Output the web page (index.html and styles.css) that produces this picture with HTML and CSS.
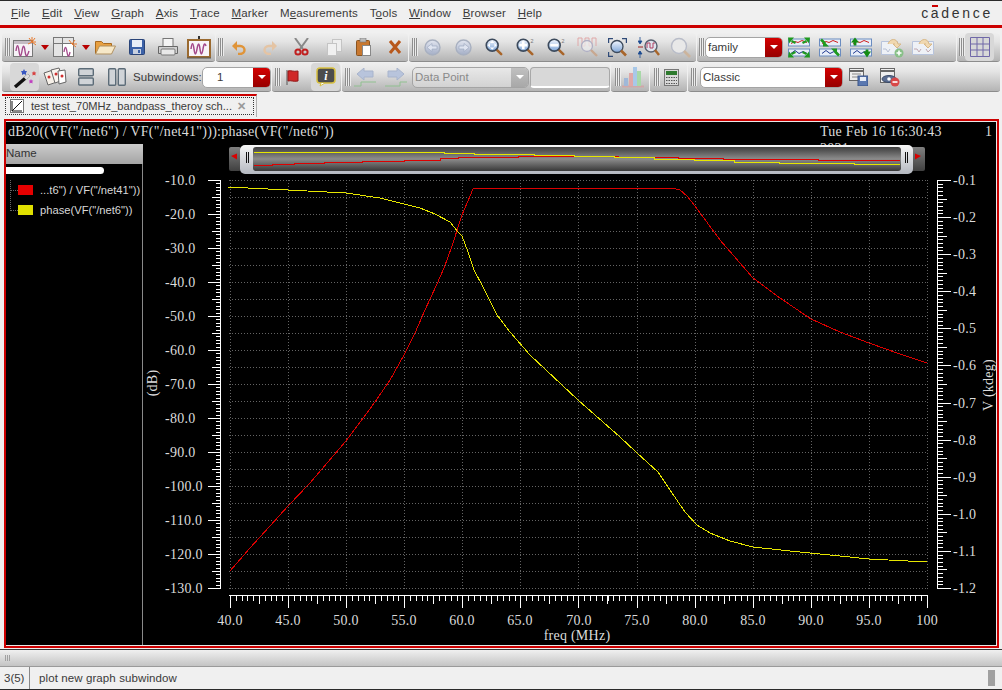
FILE: index.html
```html
<!DOCTYPE html>
<html lang="en">
<head>
<meta charset="utf-8">
<title>Cadence waveform viewer</title>
<link rel="stylesheet" href="styles.css">
</head>
<body>
<svg class="defs" width="0" height="0">
  <defs>
    <linearGradient id="lens" x1="0" y1="0" x2="0" y2="1"><stop offset="0" stop-color="#f4f8ff"/><stop offset="1" stop-color="#7fa6d8"/></linearGradient>
    <linearGradient id="round" x1="0" y1="0" x2="0" y2="1"><stop offset="0" stop-color="#e2e6f0"/><stop offset="1" stop-color="#a4aec6"/></linearGradient>
    <linearGradient id="pill" x1="0" y1="0" x2="0" y2="1"><stop offset="0" stop-color="#f6f6f6"/><stop offset="1" stop-color="#b4b8c0"/></linearGradient>
    <linearGradient id="well" x1="0" y1="0" x2="0" y2="1"><stop offset="0" stop-color="#3c3c3c"/><stop offset=".5" stop-color="#8c8c8c"/><stop offset="1" stop-color="#383838"/></linearGradient>
    <linearGradient id="cap" x1="0" y1="0" x2="0" y2="1"><stop offset="0" stop-color="#808080"/><stop offset="1" stop-color="#404040"/></linearGradient>
    <symbol id="glass" viewBox="0 0 20 20">
      <path d="M12 12l6 6" stroke="#a8652a" stroke-width="2.8" stroke-linecap="round"/>
      <circle cx="8" cy="8" r="6.6" fill="url(#lens)" stroke="#3c4a5c" stroke-width="1.8"/>
    </symbol>
    <symbol id="trace" viewBox="0 0 22 20">
      <rect x=".5" y="1.5" width="21" height="7" fill="#e8eef8" stroke="#6a8cc0"/>
      <rect x=".5" y="11.5" width="21" height="7" fill="#e8eef8" stroke="#6a8cc0"/>
      <path d="M3 6l4-2 3 1 4-2 5 2" stroke="#d02020" fill="none"/>
      <path d="M3 16l4-3 4 3 4-2 4 2" stroke="#203a90" fill="none"/>
    </symbol>
  </defs>
</svg>

<header class="menubar">
  <nav class="menus">
    <span><u>F</u>ile</span><span><u>E</u>dit</span><span><u>V</u>iew</span><span><u>G</u>raph</span><span><u>A</u>xis</span><span><u>T</u>race</span><span><u>M</u>arker</span><span>M<u>e</u>asurements</span><span>T<u>o</u>ols</span><span><u>W</u>indow</span><span><u>B</u>rowser</span><span><u>H</u>elp</span>
  </nav>
  <div class="logo">c<span class="logo-a">a</span>dence</div>
</header>

<div class="toolbars">
  <div class="tbrow">
    <div class="seg w213 p3">
      <i class="grip"></i>
      <svg class="ml2" width="24" height="20" viewBox="0 0 24 20"><rect x=".5" y="3.5" width="19" height="16" fill="#f6f2f6" stroke="#777"/><rect x="1" y="4" width="18" height="3" fill="#c4bcc4"/><path d="M3 14c1-7 2-7 3 0s2 6 3 0 2-7 3 0 2 6 4 0" stroke="#a3488a" stroke-width="1.4" fill="none"/><path d="M19 5l3-4M19 5l4 0M19 5l-3-4M19 5l4 3M19 5l-4 2M19 5l0-5" stroke="#e8782a"/></svg>
      <svg class="ml4" width="8" height="5" viewBox="0 0 8 5"><path d="M0 0h8L4 5z" fill="#b80000"/></svg>
      <svg class="ml4" width="24" height="20" viewBox="0 0 24 20"><rect x=".5" y=".5" width="20" height="19" fill="#e4e4e4" stroke="#777"/><path d="M1 6.5h19M9.5 1v18" stroke="#777"/><rect x="10" y="7" width="10" height="12" fill="#fff"/><path d="M11 15c1-6 2-6 3 0s2 5 3 0" stroke="#a3488a" stroke-width="1.3" fill="none"/><path d="M19 7l3-4M19 7h5M19 7l-3-4M19 7l4 3" stroke="#e8782a"/></svg>
      <svg class="ml5" width="8" height="5" viewBox="0 0 8 5"><path d="M0 0h8L4 5z" fill="#b80000"/></svg>
      <svg class="ml5" width="21" height="16" viewBox="0 0 21 16"><path d="M.5 15V2.5h6l2 2h8V8" fill="#e8a040" stroke="#a86a20"/><path d="M.5 15l4-8h16l-4 8z" fill="#f6e8c8" stroke="#b09060"/></svg>
      <svg class="ml13" width="16" height="16" viewBox="0 0 16 16"><rect x=".5" y=".5" width="15" height="15" rx="1" fill="#3c62a8" stroke="#2a4478"/><rect x="3" y="1" width="10" height="7" fill="#e8eef8"/><rect x="4" y="10" width="8" height="5" fill="#c8d0e0"/><rect x="9" y="11" width="2" height="3" fill="#3c62a8"/></svg>
      <svg class="ml13" width="20" height="18" viewBox="0 0 20 18"><rect x="5" y=".5" width="10" height="8" fill="#f4f4f4" stroke="#777"/><path d="M.5 8.5h19v7h-19z" fill="#d0d0d0" stroke="#666"/><rect x="3" y="11" width="14" height="6" rx="1" fill="#e8e8e8" stroke="#777"/></svg>
      <svg class="ml9" width="24" height="23" viewBox="0 0 24 23"><path d="M12 0v4" stroke="#333" stroke-width="2"/><rect x="1" y="4" width="22" height="17" fill="#f8f4f8" stroke="#9a6a30" stroke-width="2"/><path d="M4 13c1-7 2-7 3 0s2 6 3 0 2-7 3 0 2 6 3 0 2-6 3-3" stroke="#a3488a" stroke-width="1.5" fill="none"/><path d="M0 22h24" stroke="#555"/></svg>
    </div>
    <div class="seg w192 p2">
      <i class="grip"></i>
      <svg class="ml8" width="14" height="15" viewBox="0 0 14 15"><path d="M3 6h5c6 0 6 8 0 8H6" stroke="#e09438" stroke-width="2.4" fill="none"/><path d="M5 1v10L0 6z" fill="#e09438"/></svg>
      <svg class="ml17" width="14" height="15" viewBox="0 0 14 15"><path d="M11 6H6c-6 0-6 8 0 8h2" stroke="#e4c4a4" stroke-width="2.4" fill="none"/><path d="M9 1v10l5-5z" fill="#e4c4a4"/></svg>
      <svg class="ml17" width="15" height="18" viewBox="0 0 15 18"><path d="M1 0l8 11M14 0L6 11" stroke="#888" stroke-width="2"/><circle cx="4" cy="14" r="2.6" fill="none" stroke="#c02020" stroke-width="2"/><circle cx="11" cy="14" r="2.6" fill="none" stroke="#c02020" stroke-width="2"/></svg>
      <svg class="ml18" width="15" height="17" viewBox="0 0 15 17"><rect x="5.5" y=".5" width="9" height="12" fill="#eee" stroke="#c4c4c4"/><rect x=".5" y="4.5" width="9" height="12" fill="#f0f0f0" stroke="#c4c4c4"/></svg>
      <svg class="ml14" width="15" height="18" viewBox="0 0 15 18"><rect x=".5" y="2.5" width="13" height="15" rx="1" fill="#c87830" stroke="#8a5420"/><rect x="4" y="0" width="6" height="4" fill="#bbb" stroke="#777" stroke-width=".6"/><rect x="6.5" y="7.5" width="8" height="10" fill="#fff" stroke="#888"/></svg>
      <svg class="ml17" width="14" height="14" viewBox="0 0 14 14"><path d="M2 1l10 12M12 1L2 13" stroke="#b8581c" stroke-width="3"/></svg>
    </div>
    <div class="seg w287 p3">
      <i class="grip"></i>
      <svg class="ml6" width="17" height="17" viewBox="0 0 17 17"><circle cx="8.5" cy="8.5" r="7.5" fill="url(#round)" stroke="#a8b0c0" stroke-width="1.4"/><path d="M3 8.5l5-4v2.5h5v3H8v2.5z" fill="#dfe4f0" stroke="#98a4bc" stroke-width=".6"/></svg>
      <svg class="ml14" width="17" height="17" viewBox="0 0 17 17"><circle cx="8.5" cy="8.5" r="7.5" fill="url(#round)" stroke="#a8b0c0" stroke-width="1.4"/><path d="M14 8.5l-5-4v2.5H4v3h5v2.5z" fill="#dfe4f0" stroke="#98a4bc" stroke-width=".6"/></svg>
      <svg class="ml13" width="18" height="18" viewBox="0 0 20 20"><use href="#glass"/><path d="M3 8l2.500-2.500v5zM13 8l-2.500-2.500v5zM8 3L5.500 5.500h5zM8 13l-2.500-2.500h5z" fill="#fff"/></svg>
      <svg class="ml13" width="19" height="18" viewBox="0 0 21 20"><use href="#glass" width="20" height="20"/><path d="M3.500 6.500h3v-3h3v3h3v3h-3v3h-3v-3h-3z" fill="#fff"/><text class="sup" x="16" y="6">2</text></svg>
      <svg class="ml12" width="19" height="18" viewBox="0 0 21 20"><use href="#glass" width="20" height="20"/><path d="M3.500 6.500h9v3h-9z" fill="#fff"/><text class="sup" x="16" y="6">2</text></svg>
      <svg class="ml11" width="21" height="20" viewBox="0 0 21 20"><path d="M1 9V1h4v8h3V1h4v8h3V1h4v8" stroke="#e0a8a8" fill="none"/><circle cx="10" cy="9" r="5.5" fill="#eee" fill-opacity=".7" stroke="#b0b0c4" stroke-width="1.3"/><path d="M14 13l6 6" stroke="#c8a890" stroke-width="2.4"/></svg>
      <svg class="ml10" width="19" height="19" viewBox="0 0 19 19"><path d="M.5 5V.5H5M14 .5h4.500V5M.5 14v4.500H5" stroke="#2f4a78" stroke-width="1.4" fill="none"/><circle cx="9" cy="8.5" r="6" fill="url(#lens)" stroke="#3c4a5c" stroke-width="1.3"/><path d="M13 12.5l5 5" stroke="#a8652a" stroke-width="2.6"/></svg>
      <svg class="ml11" width="22" height="21" viewBox="0 0 22 21"><path d="M2 0v6M2 14v7M0 4l2 3 2-3zM0 17l2-3 2 3z" stroke="#1a4a90" fill="#1a4a90" stroke-width=".8"/><path d="M0 10h5" stroke="#a02020"/><circle cx="13" cy="9" r="6" fill="#dfe4ee" stroke="#586070" stroke-width="1.4"/><path d="M9 11V6h3v5h3V6h2" stroke="#b04060" fill="none"/><path d="M17 13l4 5" stroke="#a8652a" stroke-width="2.4"/></svg>
      <svg class="ml10" width="21" height="21" viewBox="0 0 21 21"><circle cx="9" cy="9" r="7.5" fill="#e8e8e8" stroke="#b8bcc8" stroke-width="1.4"/><path d="M14 14l6 6" stroke="#ccb49c" stroke-width="2.6"/></svg>
    </div>
    <div class="seg w259 p2">
      <i class="grip"></i>
      <div class="combo w78"><span class="combo-text">family</span><b class="drop"></b></div>
      <svg class="ml5" width="22" height="21" viewBox="0 0 22 20"><use href="#trace"/><path d="M3.500 3.500l4 2M18.500 3.500l-4 2M3.500 16.500l4-2M18.500 16.500l-4-2" stroke="#1f9a1f" stroke-width="2.2"/><path d="M0 0h6L1 6zM22 0h-6l5 6zM0 20h6L1 14zM22 20h-6l5-6z" fill="#1f9a1f"/></svg>
      <svg class="ml9" width="22" height="21" viewBox="0 0 22 20"><use href="#trace"/><path d="M2 2l4 4M20 18l-4-4" stroke="#1f9a1f" stroke-width="2.6"/><path d="M10 9H4V3zM12 11h6v6z" fill="#1f9a1f"/></svg>
      <svg class="ml9" width="22" height="21" viewBox="0 0 22 20"><use href="#trace"/><path d="M5 8V3M17 12v5" stroke="#148c14" stroke-width="2.8"/><path d="M1 5l4-5 4 5zM13 14h8l-4 6z" fill="#148c14"/></svg>
      <svg class="ml9" width="23" height="21" viewBox="0 0 23 21"><path d="M.5 4.500h16v13H.5z" fill="#eef1f6" stroke="#b8c4dc"/><path d="M2 12h3l2 3 2-3" stroke="#b8c0d4" fill="none"/><path d="M7 7c2-6 9-6 10 0h3l-4 4-4-4h2" fill="#f0d8b0" stroke="#d8b888"/><circle cx="18" cy="16" r="4.5" fill="#88c088"/><path d="M15.500 16h5M18 13.500v5" stroke="#fff" stroke-width="1.6"/></svg>
      <svg class="ml8" width="23" height="21" viewBox="0 0 23 21"><path d="M.5 4.500h21v13H.5z" fill="#eef1f6" stroke="#b8c4dc"/><path d="M2 12h3l2 3 2-3M14 12l2 3 3-3" stroke="#c0a8b0" fill="none"/><path d="M7 7c2-6 9-6 10 0h3l-4 4-4-4h2" fill="#f0d8b0" stroke="#d8b888"/></svg>
    </div>
    <div class="seg w43 p2">
      <i class="grip"></i>
      <div class="toggle"><svg width="20" height="20" viewBox="0 0 20 20"><path d="M.5 .5h19v19H.5zM7 .5v19M13 .5v19M.5 7h19M.5 13h19" fill="none" stroke="#7068a8"/></svg></div>
    </div>
  </div>

  <div class="tbrow">
    <div class="seg w269 p8">
      <div class="toggle"><svg width="24" height="22" viewBox="0 0 24 22"><path d="M2 21L16 9" stroke="#111" stroke-width="3.4"/><path d="M12 12.500l4-3.500" stroke="#ddd" stroke-width="3.4"/><path d="M11 3l1 2 2 0-1 2 0 2-2-1-2 1 0-2-1-2 2 0z" fill="#3858c0"/><path d="M21 5l.8 1.500h1.500l-1 1.300.3 1.700-1.600-.7-1.600.7.3-1.700-1-1.300h1.500z" fill="#d84040"/><path d="M18 13l.8 1.500h1.500l-1 1.300.3 1.700-1.600-.7-1.600.7.3-1.700-1-1.300h1.500z" fill="#c040c0"/></svg></div>
      <svg class="ml4" width="24" height="20" viewBox="0 0 24 20"><path d="M1 6l9-3 4 12-9 3z" fill="#f6f0e8" stroke="#666"/><path d="M8 3l8-2 4 12-8 3z" fill="#fbf6f0" stroke="#666"/><path d="M15 4l7-1 1 12-7 2z" fill="#fff" stroke="#666"/><circle cx="6" cy="10" r="1.5" fill="#d03030"/><circle cx="13" cy="7" r="1.5" fill="#d03030"/><circle cx="19" cy="9" r="1.5" fill="#d03030"/></svg>
      <svg class="ml11" width="16" height="18" viewBox="0 0 16 18"><rect x=".7" y=".7" width="14.6" height="7" rx="1" fill="#d0d4d8" stroke="#5c6c78" stroke-width="1.4"/><rect x=".7" y="10" width="14.6" height="7" rx="1" fill="#d0d4d8" stroke="#5c6c78" stroke-width="1.4"/></svg>
      <svg class="ml14" width="18" height="18" viewBox="0 0 18 18"><rect x=".7" y=".7" width="7" height="16.6" rx="1" fill="#d0d4d8" stroke="#5c6c78" stroke-width="1.4"/><rect x="10.3" y=".7" width="7" height="16.6" rx="1" fill="#d0d4d8" stroke="#5c6c78" stroke-width="1.4"/></svg>
      <span class="label ml7">Subwindows:</span>
      <div class="combo w69 ml1"><span class="spin-text">1</span><b class="drop"></b></div>
    </div>
    <div class="seg w69 p3">
      <i class="grip"></i>
      <svg class="ml5" width="13" height="15" viewBox="0 0 13 15"><path d="M1 0v15" stroke="#555"/><path d="M2 1c3-1 5 1 10 0v10c-5 1-7-1-10 0z" fill="#d02828" stroke="#901818"/></svg>
      <div class="toggle ml12"><svg width="20" height="20" viewBox="0 0 20 20"><rect x="1" y="1" width="18" height="15" rx="3" fill="#4c4c4c" stroke="#d8c040" stroke-width="1.5"/><path d="M5 16l-1 3 5-3" fill="#fff" stroke="#d8c040"/><text class="info" x="10" y="13">i</text></svg></div>
    </div>
    <div class="seg w268 p3">
      <i class="grip"></i>
      <svg class="ml3" width="22" height="19" viewBox="0 0 22 19"><path d="M0 18h7v-4h15" stroke="#90c090" fill="none"/><path d="M3 6l7-6v3h9v6h-9v3z" fill="#b8c4dc" stroke="#a8b4cc"/></svg>
      <svg class="ml9" width="22" height="19" viewBox="0 0 22 19"><path d="M0 18h15v-4h7" stroke="#90c090" fill="none"/><path d="M19 6l-7-6v3H3v6h9v3z" fill="#b8c4dc" stroke="#a8b4cc"/></svg>
      <div class="combo off w117 ml5"><span class="combo-text">Data Point</span><b class="drop"></b></div>
      <div class="field ml1"></div>
    </div>
    <div class="seg w38 p4">
      <i class="grip"></i>
      <svg class="ml1" width="22" height="22" viewBox="0 0 22 22"><path d="M0 20.500h22" stroke="#d0a8a8" stroke-width="2"/><rect x="2" y="12" width="4" height="8" fill="#a0b8d8"/><rect x="7" y="7" width="4" height="13" fill="#e0a8a8"/><rect x="11" y="1" width="4" height="19" fill="#a8c8e8"/><rect x="15" y="5" width="4" height="15" fill="#a8d8a8"/></svg>
    </div>
    <div class="seg w37 p4">
      <i class="grip"></i>
      <svg class="ml4" width="15" height="17" viewBox="0 0 15 17"><rect x=".5" y=".5" width="14" height="16" fill="#d8d8d8" stroke="#777"/><rect x="2" y="2" width="11" height="4" fill="#2e7a2e"/><path d="M2 8.500h11M2 11.500h11M2 14.500h11" stroke="#555" stroke-dasharray="1.5 1"/></svg>
    </div>
    <div class="seg grow p3">
      <i class="grip"></i>
      <div class="combo w143 ml3"><span class="combo-text">Classic</span><b class="drop"></b></div>
      <svg class="ml6" width="19" height="18" viewBox="0 0 19 18"><rect x=".5" y=".5" width="14" height="12" fill="#eee" stroke="#666"/><path d="M1 3h13" stroke="#666" stroke-width="2"/><path d="M3 6h9M3 9h9" stroke="#888"/><rect x="9" y="8" width="10" height="10" fill="#5a78b0" stroke="#3a5488"/><rect x="11" y="9" width="6" height="4" fill="#e8eef8"/></svg>
      <svg class="ml12" width="20" height="19" viewBox="0 0 20 19"><rect x=".5" y=".5" width="14" height="14" fill="#eee" stroke="#666"/><path d="M1 3h13" stroke="#666" stroke-width="2"/><ellipse cx="9" cy="11" rx="7" ry="3.5" fill="#5a6c90" stroke="#3a4a68"/><circle cx="9" cy="11" r="1.8" fill="#fff"/><circle cx="15" cy="14" r="4.5" fill="#d84848"/><path d="M12.500 14h5" stroke="#fff" stroke-width="1.6"/></svg>
    </div>
  </div>
</div>

<div class="tabstrip">
  <div class="tab">
    <div class="tab-focus">
      <svg width="14" height="14" viewBox="0 0 14 14"><rect x=".5" y=".5" width="13" height="13" fill="#fff" stroke="#777"/><path d="M2 12L12 2M2 2v10h10" stroke="#111" fill="none"/></svg>
      <span class="tab-title">test test_70MHz_bandpass_theroy sch...</span>
      <span class="tab-x">✕</span>
    </div>
  </div>
</div>

<main class="frame">
  <div class="canvas">
    <div class="plot-head">
      <span class="plot-title">dB20((VF("/net6") / VF("/net41"))):phase(VF("/net6"))</span>
      <span class="plot-date">Tue Feb 16 16:30:43 2021</span>
      <span class="plot-num">1</span>
    </div>
    <div class="plot-body">
      <aside class="legend">
        <div class="legend-head">Name</div>
        <div class="legend-pill"></div>
        <div class="legend-row"><i class="swatch red"></i><span>...t6") / VF("/net41"))</span></div>
        <div class="legend-row"><i class="swatch yellow"></i><span>phase(VF("/net6"))</span></div>
      </aside>
      <svg class="chart" width="853" height="501" viewBox="143 144 853 501">
        <path class="grid" d="M229 180.5H927M229 197.5H927M229 214.5H927M229 231.5H927M229 248.5H927M229 265.5H927M229 282.5H927M229 299.5H927M229 316.5H927M229 333.5H927M229 350.5H927M229 367.5H927M229 384.5H927M229 401.5H927M229 418.5H927M229 435.5H927M229 452.5H927M229 469.5H927M229 486.5H927M229 503.5H927M229 520.5H927M229 537.5H927M229 554.5H927M229 571.5H927M229 588.5H927"/>
        <path class="grid" d="M230.5 180V589M288.5 180V589M346.5 180V589M404.5 180V589M462.5 180V589M520.5 180V589M578.5 180V589M637.5 180V589M695.5 180V589M753.5 180V589M811.5 180V589M869.5 180V589M927.5 180V589"/>

        <g class="ticks">
          <path d="M220.5 180V589"/>
          <path class="t5" stroke-dasharray="1 2.4" d="M218.5 180V589"/>
          <path class="t9" stroke-dasharray="1 33" d="M216.5 197V589"/>
          <path class="t13" stroke-dasharray="1 33" d="M214.5 180V589"/>
          <path d="M937.5 180V589"/>
          <path class="t5" stroke-dasharray="1 2.709" d="M940.5 180V589"/>
          <path class="t9" stroke-dasharray="1 36.09" d="M942.5 198.5V589"/>
          <path class="t13" stroke-dasharray="1 36.09" d="M944 180V589"/>
          <path d="M229 595.5H928"/>
          <path class="t5" stroke-dasharray="1 4.808" d="M230 598H928"/>
          <path class="t8" stroke-dasharray="1 57.08" d="M259 600H928"/>
          <path class="t12" stroke-dasharray="1 57.08" d="M230 602H928"/>
        </g>

        <g class="lab">
          <text x="165" y="185">-10.0</text><text x="165" y="219">-20.0</text><text x="165" y="253">-30.0</text><text x="165" y="287">-40.0</text><text x="165" y="321">-50.0</text><text x="165" y="355">-60.0</text><text x="165" y="389">-70.0</text><text x="165" y="423">-80.0</text><text x="165" y="457">-90.0</text><text x="165" y="491">-100.0</text><text x="165" y="525">-110.0</text><text x="165" y="559">-120.0</text><text x="165" y="593">-130.0</text>
          <text x="953" y="185">-0.1</text><text x="953" y="222">-0.2</text><text x="953" y="259">-0.3</text><text x="953" y="296">-0.4</text><text x="953" y="333">-0.5</text><text x="953" y="370">-0.6</text><text x="953" y="408">-0.7</text><text x="953" y="445">-0.8</text><text x="953" y="482">-0.9</text><text x="953" y="519">-1.0</text><text x="953" y="556">-1.1</text><text x="953" y="593">-1.2</text>
        </g>
        <g class="lab mid">
          <text x="230" y="625">40.0</text><text x="288" y="625">45.0</text><text x="346" y="625">50.0</text><text x="404" y="625">55.0</text><text x="462" y="625">60.0</text><text x="520" y="625">65.0</text><text x="579" y="625">70.0</text><text x="637" y="625">75.0</text><text x="695" y="625">80.0</text><text x="753" y="625">85.0</text><text x="811" y="625">90.0</text><text x="869" y="625">95.0</text><text x="927" y="625">100</text>
          <text x="577" y="640">freq (MHz)</text>
          <text transform="translate(157 383) rotate(-90)">(dB)</text>
          <text transform="translate(993 385) rotate(-90)">V (kdeg)</text>
        </g>

        <polyline class="curve c-red" points="230,571 250,548 270,526 288,506 310,483 346,441 375,402 390,380 404,355 415,333 425,310 437,284 444,268 452,246 462,215 473,189 479,188 672,188 680,190 687,196 695,206 720,240 753,278 780,298 811,319 840,332 869,343 900,354 927,363"/>
        <polyline class="curve c-yel" points="228,187 288,190 346,193 380,198 404,204 420,208 435,214 450,222 458,232 462,236 468,252 474,270 482,285 497,315 510,332 530,355 578,400 620,437 636,452 658,472 670,490 685,512 697,525 710,533 730,541 753,547 790,551 830,555 869,559 927,562"/>

        <g class="slider">
          <rect x="229" y="147" width="12" height="24" rx="2" fill="url(#cap)"/>
          <rect x="905" y="147" width="20" height="24" rx="2" fill="url(#cap)"/>
          <path d="M231 156l6-2.5v6z" fill="#d80000"/>
          <path d="M921 156l-6-2.5v6z" fill="#d80000"/>
          <rect x="240" y="145" width="673" height="29" rx="5" fill="url(#pill)"/>
          <rect x="253" y="147" width="648" height="24" rx="3" fill="url(#well)"/>
          <path d="M246.500 152v11M248.500 152v11M905.500 152v11M907.500 152v11" stroke="#111" fill="none"/>
          <path class="curve c-red" d="M254 165h18v-1h22v-1h30v-1h38v-1h42v-1h36v-2h18v-1h60v-1h100v1h60v1h45v1h95v1h82"/>
          <path class="curve c-yel" d="M254 152.500h190v1h30v1h60v1h40v1h40v1h40v2h40v1h40v2h45v1h75v1h46"/>
        </g>
      </svg>
    </div>
  </div>
</main>

<div class="hbar"><i class="hgrip"></i></div>
<footer class="status">
  <span class="status-count">3(5)</span>
  <span class="status-msg">plot new graph subwindow</span>
  <i class="status-thumb"></i>
</footer>
</body>
</html>
```

FILE: styles.css
```css
* { box-sizing: border-box; }
html, body { margin: 0; height: 690px; overflow: hidden; }
body {
  width: 1002px;
  background: #f0f0f0;
  border-top: 1px solid #2a2a2a;
  border-bottom: 1px solid #2a2a2a;
  font-family: "Liberation Sans", Arial, sans-serif;
  font-size: 12px;
  color: #3a3a3a;
}
.defs { position: absolute; }
i { display: block; font-style: normal; }
svg { display: block; flex: none; }

/* Menu bar */
.menubar {
  height: 27px;
  display: flex;
  align-items: center;
  justify-content: space-between;
  border-bottom: 3px solid #cc0000;
  padding: 0 9px 0 11px;
}
.menus { display: flex; font-size: 11.5px; letter-spacing: .15px; }
.menus span { margin-right: 11.8px; white-space: nowrap; }
.logo {
  font-size: 14px;
  letter-spacing: 2.7px;
  color: #333;
}
.logo-a { position: relative; }
.logo-a::before {
  content: "";
  position: absolute;
  left: 1px;
  right: 3px;
  top: 0;
  height: 2px;
  background: #cc0000;
}

/* Toolbars */
.toolbars { padding: 5px 2px 0; display: flex; flex-direction: column; gap: 1px; height: 65px; }
.tbrow { display: flex; gap: 1px; height: 29px; }
.seg {
  display: flex;
  align-items: center;
  flex: none;
  height: 29px;
  border-radius: 4px 4px 3px 3px;
  border-bottom: 1px solid #8c8c8c;
  background: linear-gradient(#efefef, #e4e4e4 30%, #b4b4b4);
}
.grow { flex: 1; }
.w213 { width: 213px; } .w192 { width: 192px; } .w287 { width: 287px; }
.w259 { width: 259px; } .w43 { width: 43px; } .w269 { width: 269px; }
.w69 { width: 69px; } .w268 { width: 268px; } .w38 { width: 38px; }
.w37 { width: 37px; } .w78 { width: 78px; } .w117 { width: 117px; } .w143 { width: 143px; }
.p2 { padding-left: 2px; } .p3 { padding-left: 3px; } .p4 { padding-left: 4px; } .p8 { padding-left: 8px; }
.ml1 { margin-left: 1px; } .ml2 { margin-left: 2px; } .ml3 { margin-left: 3px; }
.ml4 { margin-left: 4px; } .ml5 { margin-left: 5px; } .ml6 { margin-left: 6px; }
.ml7 { margin-left: 7px; } .ml8 { margin-left: 8px; } .ml9 { margin-left: 9px; }
.ml10 { margin-left: 10px; } .ml11 { margin-left: 11px; } .ml12 { margin-left: 12px; }
.ml13 { margin-left: 13px; } .ml14 { margin-left: 14px; } .ml17 { margin-left: 17px; } .ml18 { margin-left: 18px; }
.grip {
  width: 6px;
  height: 18px;
  flex: none;
  background: repeating-linear-gradient(90deg, #8e8e8e 0 1px, #ececec 1px 2px);
}
.toggle {
  width: 29px;
  height: 28px;
  flex: none;
  display: flex;
  align-items: center;
  justify-content: center;
  border-radius: 4px;
  background: #d8d8d8;
}
.label { width: 68px; white-space: nowrap; font-size: 11.5px; letter-spacing: .1px; }

.combo {
  height: 21px;
  flex: none;
  display: flex;
  align-items: center;
  background: #fff;
  border: 1px solid #a4a4a4;
  border-radius: 5px;
  overflow: hidden;
  font-size: 11.5px;
}
.combo-text { flex: 1; padding-left: 2px; white-space: nowrap; }
.spin-text { flex: 1; padding-left: 14px; }
.drop {
  width: 17px;
  align-self: stretch;
  flex: none;
  display: flex;
  align-items: center;
  justify-content: center;
  background: linear-gradient(#d40000, #960000);
}
.drop::after {
  content: "";
  border-left: 4px solid transparent;
  border-right: 4px solid transparent;
  border-top: 4px solid #fff;
}
.off { background: linear-gradient(#e8e8e8, #d2d2d2); color: #8a8a8a; }
.off .combo-text { padding-left: 2px; }
.off .drop { background: linear-gradient(#c0c0c0, #a8a8a8); }
.field {
  width: 80px;
  height: 21px;
  border: 1px solid #a8a8a8;
  border-bottom: 2px solid #fff;
  border-radius: 4px;
  background: #d8d8d8;
}
.sup { font-size: 6px; fill: #777; font-family: "Liberation Sans", sans-serif; }
.info { font: italic bold 12px "Liberation Serif", serif; fill: #fff; text-anchor: middle; }

/* Tab strip */
.tabstrip { height: 26px; padding: 1px 0 0 2px; }
.tab {
  width: 255px;
  height: 23px;
  border-top: 2px solid #cc0000;
  border-right: 1px solid #b0b0b0;
  padding: 1px 2px 0 3px;
}
.tab-focus {
  height: 18px;
  display: flex;
  align-items: center;
  border: 1px dotted #333;
  padding-left: 4px;
}
.tab-title { margin-left: 7px; width: 206px; font-size: 11.1px; white-space: nowrap; }
.tab-x { font-size: 11px; color: #999; font-weight: bold; }

/* Plot frame */
.frame {
  width: 995px;
  height: 529px;
  margin-left: 4px;
  border: 2px solid #cc0000;
}
.canvas {
  height: 525px;
  border: 1px solid #e8e8e8;
  border-left: 0;
  background: #000;
  font-family: "Liberation Serif", "Times New Roman", serif;
  color: #dcdcdc;
}
.plot-head {
  height: 22px;
  position: relative;
  font-size: 14px;
  line-height: 17px;
  letter-spacing: .27px;
}
.plot-title { display: block; padding: 1px 0 0 2px; white-space: nowrap; }
.plot-date { position: absolute; left: 814px; top: 1px; width: 135px; }
.plot-num { position: absolute; left: 979px; top: 1px; }
.plot-body { display: flex; height: 501px; }

.legend {
  width: 137px;
  flex: none;
  border-right: 1px solid #8a8a8a;
  font-family: "Liberation Sans", Arial, sans-serif;
  font-size: 11.2px;
  color: #d8d8d8;
}
.legend-head {
  height: 20px;
  line-height: 19px;
  background: linear-gradient(#cccccc, #a4a4a4);
  color: #333;
  font-size: 11.5px;
  margin-right: -1px;
}
.legend-pill {
  width: 98px;
  height: 7px;
  margin-top: 3px;
  background: #fff;
  border-radius: 0 4px 4px 0;
}
.legend-row {
  height: 20px;
  display: flex;
  align-items: center;
  padding-left: 12px;
  gap: 7px;
  white-space: nowrap;
  position: relative;
}
.legend-row::before {
  content: "";
  position: absolute;
  left: 4px;
  top: -10px;
  width: 7px;
  height: 20px;
  border-left: 1px dotted #666;
  border-bottom: 1px dotted #666;
}
.legend-pill + .legend-row { margin-top: 6px; }
.legend-pill + .legend-row::before { top: 0; height: 10px; }
.swatch { width: 15px; height: 10px; flex: none; }
.red { background: #e60000; }
.yellow { background: #e0e000; }

.chart { flex: none; position: relative; }
.grid { fill: none; stroke: #646464; stroke-dasharray: 1 2; shape-rendering: crispEdges; }
.ticks path { fill: none; stroke: #fff; stroke-width: 1; shape-rendering: crispEdges; }
.ticks .t5 { stroke-width: 5px; }
.ticks .t8 { stroke-width: 8px; }
.ticks .t9 { stroke-width: 9px; }
.ticks .t12 { stroke-width: 12px; }
.ticks .t13 { stroke-width: 13px; }
.lab text { font-size: 14px; fill: #dcdcdc; letter-spacing: .25px; }
.mid text { text-anchor: middle; }
.curve { fill: none; stroke-width: 1px; shape-rendering: crispEdges; }
.c-red { stroke: #dc0000; }
.c-yel { stroke: #e6e600; }

/* Bottom bars */
.hbar {
  height: 18px;
  margin-top: 1px;
  border-top: 1px solid #333;
  border-bottom: 1px solid #9a9a9a;
  background: linear-gradient(#f0f0f0, #c4c4c4);
  padding: 5px 0 0 5px;
}
.hgrip {
  width: 5px;
  height: 6px;
  background: repeating-linear-gradient(90deg, #a0a0a0 0 1px, transparent 1px 2px);
}
.status {
  height: 22px;
  display: flex;
  align-items: center;
  font-size: 11.5px;
  position: relative;
}
.status-count {
  width: 30px;
  padding-left: 4px;
  align-self: stretch;
  display: flex;
  align-items: center;
  border-right: 1px solid #888;
}
.status-msg { margin-left: 9px; letter-spacing: .1px; }
.status-thumb {
  margin-left: auto;
  margin-right: 6px;
  width: 8px;
  height: 16px;
  background: #a0a0a0;
  border-right: 1px solid #eee;
}
```
